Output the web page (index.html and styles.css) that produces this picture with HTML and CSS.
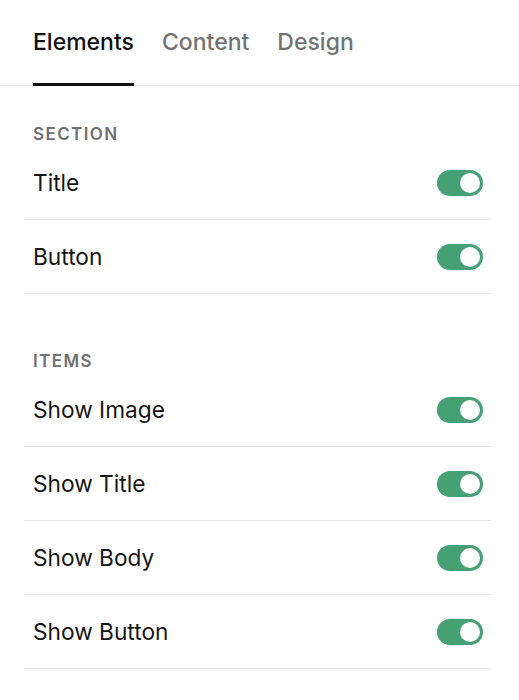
FILE: index.html
```html
<!DOCTYPE html>
<html>
<head>
    <title>Elements</title>
    <meta charset="UTF-8">
    <link rel="stylesheet" href="styles.css">
</head>
<body>
    <div class="tabs">
        <div class="tab active">Elements</div>
        <div class="tab">Content</div>
        <div class="tab">Design</div>
    </div>
    <div class="panel">
        <div class="group">
            <div class="group-label">SECTION</div>
            <div class="row"><span>Title</span><span class="toggle on"><span class="knob"></span></span></div>
            <div class="row"><span>Button</span><span class="toggle on"><span class="knob"></span></span></div>
        </div>
        <div class="group items">
            <div class="group-label">ITEMS</div>
            <div class="row"><span>Show Image</span><span class="toggle on"><span class="knob"></span></span></div>
            <div class="row"><span>Show Title</span><span class="toggle on"><span class="knob"></span></span></div>
            <div class="row"><span>Show Body</span><span class="toggle on"><span class="knob"></span></span></div>
            <div class="row"><span>Show Button</span><span class="toggle on"><span class="knob"></span></span></div>
        </div>
    </div>
</body>
</html>
```

FILE: styles.css
```css
body {
    margin: 0;
    background: #ffffff;
    font-family: Inter, "Noto Sans", sans-serif;
    color: #161616;
}
.tabs {
    display: flex;
    gap: 28px;
    padding: 0 33px;
    border-bottom: 1px solid #e8e8e8;
    height: 85px;
}
.tab {
    padding: 30px 0 0 0;
    height: 53px;
    line-height: 24px;
    font-size: 23px;
    font-weight: 500;
    color: #737373;
    border-bottom: 3px solid transparent;
}
.tab.active {
    color: #111111;
    border-bottom-color: #111111;
}
.panel {
    padding: 0 28px 0 24px;
}
.group {
    padding-top: 38px;
}
.group.items {
    padding-top: 57px;
}
.group-label {
    line-height: 20px;
    font-size: 17px;
    font-weight: 600;
    letter-spacing: 1.4px;
    color: #707070;
    padding-left: 9px;
    margin-bottom: 2px;
}
.row {
    display: flex;
    align-items: center;
    justify-content: space-between;
    height: 73px;
    padding: 0 8px 0 9px;
    border-bottom: 1px solid #e6e6e6;
    font-size: 22.7px;
    color: #161616;
}
.toggle {
    display: flex;
    justify-content: flex-end;
    align-items: center;
    width: 46px;
    height: 26px;
    box-sizing: border-box;
    padding: 0 3px;
    border-radius: 13px;
    background: #e0e0e0;
}
.toggle.on {
    background: #45a073;
}
.knob {
    width: 20px;
    height: 20px;
    border-radius: 50%;
    background: #ffffff;
}
```
